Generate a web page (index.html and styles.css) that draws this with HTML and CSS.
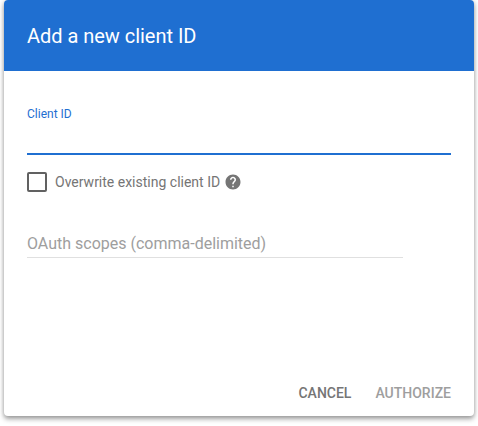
FILE: index.html
```html
<!DOCTYPE html>
<html lang="en">
<head>
  <meta charset="UTF-8" />
  <title>Add a new client ID</title>
  <link rel="stylesheet" href="styles.css">
</head>
<body>
  <div class="dialog">
    <header class="dialog-header">
      <h2>Add a new client ID</h2>
    </header>

    <form class="dialog-body">
      <label class="field-label" for="clientId">Client ID</label>
      <input class="client-input" type="text" id="clientId">

      <div class="check-row">
        <span class="check-box"></span>
        <span class="check-label">Overwrite existing client ID</span>
        <svg class="help-icon" viewBox="0 0 24 24" width="18" height="18">
          <path d="M12 2C6.48 2 2 6.48 2 12s4.48 10 10 10 10-4.48 10-10S17.52 2 12 2zm1 17h-2v-2h2v2zm2.07-7.75l-.9.92C13.45 12.9 13 13.5 13 15h-2v-.5c0-1.1.45-2.1 1.17-2.83l1.24-1.26c.37-.36.59-.86.59-1.41 0-1.1-.9-2-2-2s-2 .9-2 2H8c0-2.21 1.79-4 4-4s4 1.79 4 4c0 .88-.36 1.68-.93 2.25z"/>
        </svg>
      </div>

      <div class="scopes-field">OAuth scopes (comma-delimited)</div>
    </form>

    <div class="dialog-actions">
      <button type="button" class="btn-cancel">CANCEL</button>
      <button type="button" class="btn-authorize" disabled>AUTHORIZE</button>
    </div>
  </div>
</body>
</html>
```

FILE: styles.css
```css
:root {
  --primary-color: #1f6fd1;
  --text-muted: #757575;
  --text-hint: #9e9e9e;
}

html, body {
  height: 100%;
}

body {
  font-family: Roboto, "Liberation Sans", sans-serif;
  background-color: #ffffff;
  margin: 0;
  padding: 0 4px 10px;
  box-sizing: border-box;
  overflow: hidden;
}

.dialog {
  height: 100%;
  display: flex;
  flex-direction: column;
  background: #ffffff;
  border-radius: 4px;
  box-shadow: 0 3px 5px rgba(0,0,0,0.36), 0 0 4px rgba(0,0,0,0.14);
}

.dialog-header {
  height: 71px;
  flex: none;
  display: flex;
  align-items: center;
  padding: 0 23px;
  background-color: var(--primary-color);
  border-radius: 4px 4px 0 0;
}

.dialog-header h2 {
  margin: 0;
  color: #ffffff;
  font-size: 20px;
  font-weight: 400;
  letter-spacing: -0.03px;
}

.dialog-body {
  flex: 1;
  display: flex;
  flex-direction: column;
  padding: 36px 23px 0;
}

.field-label {
  color: var(--primary-color);
  font-size: 12px;
  line-height: 14px;
}

.client-input {
  height: 32px;
  padding: 0;
  border: none;
  border-bottom: 2px solid var(--primary-color);
  outline: none;
  box-sizing: content-box;
}

.check-row {
  display: flex;
  align-items: center;
  margin-top: 17px;
}

.check-box {
  width: 16px;
  height: 16px;
  border: 2px solid #616161;
  border-radius: 2px;
}

.check-label {
  margin-left: 8px;
  color: var(--text-muted);
  font-size: 14px;
}

.help-icon {
  margin-left: 4px;
  fill: var(--text-muted);
}

.scopes-field {
  width: 376px;
  margin-top: 40px;
  padding-bottom: 1px;
  border-bottom: 1px solid #e0e0e0;
  color: var(--text-hint);
  font-size: 16px;
  line-height: 24px;
}

.dialog-actions {
  display: flex;
  justify-content: flex-end;
  gap: 24px;
  padding: 0 23px 15px;
}

.dialog-actions button {
  padding: 0;
  border: none;
  background: none;
  font-family: inherit;
  font-size: 14px;
  font-weight: 500;
  line-height: 16px;
}

.btn-cancel {
  color: var(--text-muted);
  cursor: pointer;
}

.btn-authorize {
  color: var(--text-hint);
}
```
